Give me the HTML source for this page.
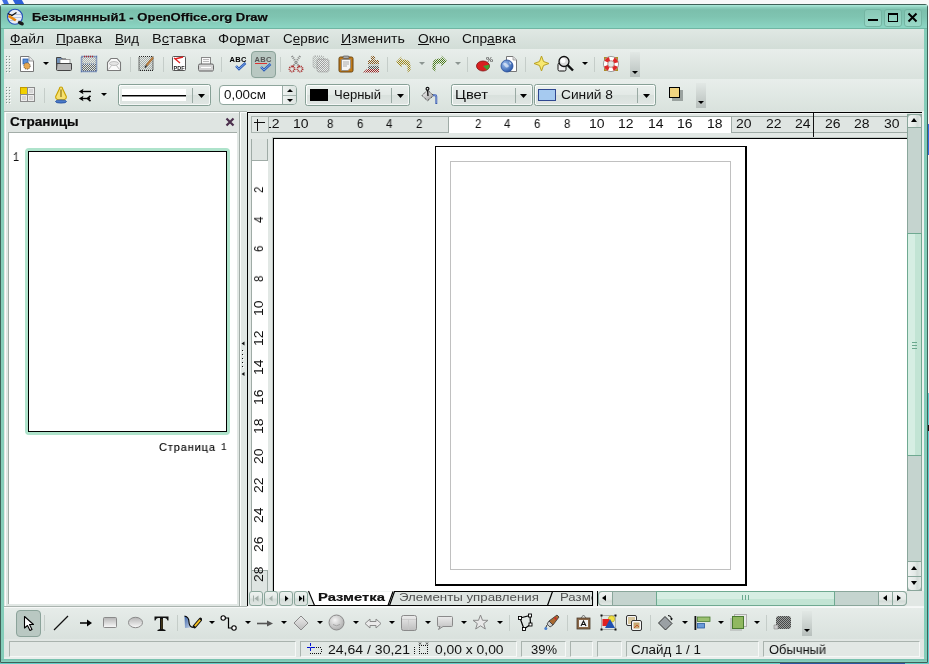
<!DOCTYPE html>
<html><head><meta charset="utf-8"><style>
*{margin:0;padding:0;box-sizing:border-box}
html,body{width:929px;height:664px;overflow:hidden;background:#f7f8f8;font-family:"Liberation Sans",sans-serif;font-size:13px;color:#000}
.a{position:absolute}
.t{position:absolute;white-space:nowrap;line-height:1;transform-origin:0 0;will-change:transform}
.grip{position:absolute;width:5px;background-image:radial-gradient(circle at 1px 1px,#aab6b1 0.9px,transparent 1.1px);background-size:3px 3px}
.sep{position:absolute;width:1px;height:15px;background:#c3ccc8}
.dd{position:absolute;width:0;height:0;border-left:3px solid transparent;border-right:3px solid transparent;border-top:3px solid #000}
.combo{position:absolute;border:1px solid #8fa69d;border-radius:4px;background:linear-gradient(#e6ece9,#dce3df)}
.field{position:absolute;background:#fff}
.sbtn{position:absolute;border:1px solid #8fa69d;background:linear-gradient(90deg,#e9eeec,#dfe6e3 60%,#d3dcd8)}
.tri-u{position:absolute;width:0;height:0;border-left:3.5px solid transparent;border-right:3.5px solid transparent;border-bottom:4px solid #000}
.tri-d{position:absolute;width:0;height:0;border-left:3.5px solid transparent;border-right:3.5px solid transparent;border-top:4px solid #000}
.tri-l{position:absolute;width:0;height:0;border-top:3.5px solid transparent;border-bottom:3.5px solid transparent;border-right:4px solid #000}
.tri-r{position:absolute;width:0;height:0;border-top:3.5px solid transparent;border-bottom:3.5px solid transparent;border-left:4px solid #000}
.stf{position:absolute;top:641px;height:16px;border-top:1px solid #a9b3ae;border-left:1px solid #a9b3ae;border-bottom:1px solid #f4f7f6;border-right:1px solid #f4f7f6}
</style></head><body>
<div class="a" style="left:3px;top:0;width:5px;height:4px;background:#3d6be0;transform:skewX(25deg)"></div>
<div class="a" style="left:14px;top:0;width:9px;height:4px;background:#2d5fd8;transform:skewX(30deg)"></div>
<div class="a" style="left:928px;top:124px;width:1px;height:31px;background:#2f6ce0"></div>
<div class="a" style="left:928px;top:393px;width:1px;height:270px;background:#5ecfcf"></div>
<div class="a" style="left:928px;top:425px;width:1px;height:6px;background:#111"></div>
<div class="a" style="left:0px;top:663px;width:929px;height:1px;background:#62cfc8"></div>
<div class="a" style="left:780px;top:663px;width:125px;height:1px;background:#2a58a6"></div>
<div class="a" style="left:0px;top:4px;width:928px;height:659px;background:#84cdb9;border:1px solid #3f6158;border-radius:3px 3px 0 0"></div>
<div class="a" style="left:1px;top:5px;width:926px;height:24px;background:linear-gradient(#a6e4d4 0,#a6e4d4 1px,#90d2c0 2px,#7bbfac 5px,#7fc4b1 12px,#8ad4c2 22px,#8ad4c2 23px,#70b6a3 23px)"></div>
<div class="a" style="left:4px;top:29px;width:920px;height:630px;background:#e2e8e5"></div>
<div class="a" style="left:1px;top:659px;width:926px;height:3px;background:linear-gradient(#76bfac,#8ad2c0)"></div>
<div class="a" style="left:4px;top:29px;width:920px;height:20px;background:linear-gradient(#e0e8e4,#d2ddd7)"></div>
<div class="a" style="left:4px;top:49px;width:920px;height:30px;background:linear-gradient(#e8eeeb,#d9e2dd)"></div>
<div class="a" style="left:4px;top:79px;width:920px;height:32px;background:linear-gradient(#e8eeeb,#d9e2dd)"></div>
<div class="t" style="left:32.00px;top:11.06px;font-family:'Liberation Sans',sans-serif;font-size:11.7px;font-weight:bold;color:#0a0a0a;transform:scaleX(1.1160);text-shadow:0 1px 1px rgba(230,255,245,0.6);-webkit-text-stroke:0.25px #0a0a0a">Безымянный1 - OpenOffice.org Draw</div>
<div class="a" style="left:864px;top:9px;width:18px;height:18px;border:1px solid #74b5a3;border-radius:3px;background:linear-gradient(#88c8b6,#9ad9c8)"></div>
<div class="a" style="left:884px;top:9px;width:18px;height:18px;border:1px solid #74b5a3;border-radius:3px;background:linear-gradient(#88c8b6,#9ad9c8)"></div>
<div class="a" style="left:904px;top:9px;width:18px;height:18px;border:1px solid #74b5a3;border-radius:3px;background:linear-gradient(#88c8b6,#9ad9c8)"></div>
<div class="a" style="left:868px;top:19px;width:10px;height:2px;background:#000"></div>
<div class="a" style="left:888px;top:13px;width:10px;height:9px;border:1.5px solid #000;border-top-width:2.5px"></div>
<svg class="a" style="left:907px;top:12px" width="11" height="11"><path d="M1.5 1.5L9.5 9.5M9.5 1.5L1.5 9.5" stroke="#000" stroke-width="2"/></svg>
<div class="t" style="left:10.00px;top:31.95px;font-family:'Liberation Sans',sans-serif;font-size:13px;font-weight:normal;color:#111;transform:scaleX(1.0632);">Файл</div>
<div class="t" style="left:56.00px;top:31.95px;font-family:'Liberation Sans',sans-serif;font-size:13px;font-weight:normal;color:#111;transform:scaleX(1.0469);">Правка</div>
<div class="t" style="left:115.00px;top:31.95px;font-family:'Liberation Sans',sans-serif;font-size:13px;font-weight:normal;color:#111;transform:scaleX(1.0200);">Вид</div>
<div class="t" style="left:152.00px;top:31.95px;font-family:'Liberation Sans',sans-serif;font-size:13px;font-weight:normal;color:#111;transform:scaleX(1.1166);">Вставка</div>
<div class="t" style="left:218.00px;top:31.95px;font-family:'Liberation Sans',sans-serif;font-size:13px;font-weight:normal;color:#111;transform:scaleX(1.1268);">Формат</div>
<div class="t" style="left:283.00px;top:31.95px;font-family:'Liberation Sans',sans-serif;font-size:13px;font-weight:normal;color:#111;transform:scaleX(1.0331);">Сервис</div>
<div class="t" style="left:341.00px;top:31.95px;font-family:'Liberation Sans',sans-serif;font-size:13px;font-weight:normal;color:#111;transform:scaleX(1.0916);">Изменить</div>
<div class="t" style="left:418.00px;top:31.95px;font-family:'Liberation Sans',sans-serif;font-size:13px;font-weight:normal;color:#111;transform:scaleX(1.0587);">Окно</div>
<div class="t" style="left:462.00px;top:31.95px;font-family:'Liberation Sans',sans-serif;font-size:13px;font-weight:normal;color:#111;transform:scaleX(1.0583);">Справка</div>
<div class="a" style="left:10.0px;top:44px;width:10.5px;height:1px;background:#111"></div>
<div class="a" style="left:56.0px;top:44px;width:9.8px;height:1px;background:#111"></div>
<div class="a" style="left:115.0px;top:44px;width:8.8px;height:1px;background:#111"></div>
<div class="a" style="left:161.7px;top:44px;width:7.3px;height:1px;background:#111"></div>
<div class="a" style="left:237.3px;top:44px;width:8.1px;height:1px;background:#111"></div>
<div class="a" style="left:292.7px;top:44px;width:7.5px;height:1px;background:#111"></div>
<div class="a" style="left:341.0px;top:44px;width:10.2px;height:1px;background:#111"></div>
<div class="a" style="left:418.0px;top:44px;width:10.7px;height:1px;background:#111"></div>
<div class="a" style="left:487.0px;top:44px;width:7.7px;height:1px;background:#111"></div>
<svg width="0" height="0" style="position:absolute"><defs><pattern id="chk" width="2" height="2" patternUnits="userSpaceOnUse"><rect width="1" height="1" fill="#555"/><rect x="1" y="1" width="1" height="1" fill="#555"/></pattern><pattern id="chkY" width="2" height="2" patternUnits="userSpaceOnUse"><rect width="1" height="1" fill="#a08818"/><rect x="1" y="1" width="1" height="1" fill="#a08818"/></pattern><pattern id="chkG" width="2" height="2" patternUnits="userSpaceOnUse"><rect width="1" height="1" fill="#4a7a18"/><rect x="1" y="1" width="1" height="1" fill="#4a7a18"/></pattern><pattern id="chkR" width="2" height="2" patternUnits="userSpaceOnUse"><rect width="1" height="1" fill="#a02020"/><rect x="1" y="1" width="1" height="1" fill="#a02020"/></pattern><pattern id="chkBr" width="2" height="2" patternUnits="userSpaceOnUse"><rect width="1" height="1" fill="#8a5a20"/><rect x="1" y="1" width="1" height="1" fill="#8a5a20"/></pattern><pattern id="chkb" width="2" height="2" patternUnits="userSpaceOnUse"><rect width="1" height="1" fill="#2a4f9a"/><rect x="1" y="1" width="1" height="1" fill="#2a4f9a"/></pattern></defs></svg>
<svg class="a" style="left:6px;top:56px" width="6" height="19" viewBox="0 0 6 19"><rect x="1" y="1" width="1" height="1" fill="#fafcfb"/><rect x="0" y="0" width="1" height="1" fill="#7f8d88"/><rect x="4" y="1" width="1" height="1" fill="#fafcfb"/><rect x="3" y="0" width="1" height="1" fill="#7f8d88"/><rect x="1" y="4" width="1" height="1" fill="#fafcfb"/><rect x="0" y="3" width="1" height="1" fill="#7f8d88"/><rect x="4" y="4" width="1" height="1" fill="#fafcfb"/><rect x="3" y="3" width="1" height="1" fill="#7f8d88"/><rect x="1" y="7" width="1" height="1" fill="#fafcfb"/><rect x="0" y="6" width="1" height="1" fill="#7f8d88"/><rect x="4" y="7" width="1" height="1" fill="#fafcfb"/><rect x="3" y="6" width="1" height="1" fill="#7f8d88"/><rect x="1" y="10" width="1" height="1" fill="#fafcfb"/><rect x="0" y="9" width="1" height="1" fill="#7f8d88"/><rect x="4" y="10" width="1" height="1" fill="#fafcfb"/><rect x="3" y="9" width="1" height="1" fill="#7f8d88"/><rect x="1" y="13" width="1" height="1" fill="#fafcfb"/><rect x="0" y="12" width="1" height="1" fill="#7f8d88"/><rect x="4" y="13" width="1" height="1" fill="#fafcfb"/><rect x="3" y="12" width="1" height="1" fill="#7f8d88"/><rect x="1" y="16" width="1" height="1" fill="#fafcfb"/><rect x="0" y="15" width="1" height="1" fill="#7f8d88"/><rect x="4" y="16" width="1" height="1" fill="#fafcfb"/><rect x="3" y="15" width="1" height="1" fill="#7f8d88"/></svg>
<svg class="a" style="left:6px;top:87px" width="6" height="19" viewBox="0 0 6 19"><rect x="1" y="1" width="1" height="1" fill="#fafcfb"/><rect x="0" y="0" width="1" height="1" fill="#7f8d88"/><rect x="4" y="1" width="1" height="1" fill="#fafcfb"/><rect x="3" y="0" width="1" height="1" fill="#7f8d88"/><rect x="1" y="4" width="1" height="1" fill="#fafcfb"/><rect x="0" y="3" width="1" height="1" fill="#7f8d88"/><rect x="4" y="4" width="1" height="1" fill="#fafcfb"/><rect x="3" y="3" width="1" height="1" fill="#7f8d88"/><rect x="1" y="7" width="1" height="1" fill="#fafcfb"/><rect x="0" y="6" width="1" height="1" fill="#7f8d88"/><rect x="4" y="7" width="1" height="1" fill="#fafcfb"/><rect x="3" y="6" width="1" height="1" fill="#7f8d88"/><rect x="1" y="10" width="1" height="1" fill="#fafcfb"/><rect x="0" y="9" width="1" height="1" fill="#7f8d88"/><rect x="4" y="10" width="1" height="1" fill="#fafcfb"/><rect x="3" y="9" width="1" height="1" fill="#7f8d88"/><rect x="1" y="13" width="1" height="1" fill="#fafcfb"/><rect x="0" y="12" width="1" height="1" fill="#7f8d88"/><rect x="4" y="13" width="1" height="1" fill="#fafcfb"/><rect x="3" y="12" width="1" height="1" fill="#7f8d88"/><rect x="1" y="16" width="1" height="1" fill="#fafcfb"/><rect x="0" y="15" width="1" height="1" fill="#7f8d88"/><rect x="4" y="16" width="1" height="1" fill="#fafcfb"/><rect x="3" y="15" width="1" height="1" fill="#7f8d88"/></svg>
<svg class="a" style="left:6px;top:615px" width="6" height="19" viewBox="0 0 6 19"><rect x="1" y="1" width="1" height="1" fill="#fafcfb"/><rect x="0" y="0" width="1" height="1" fill="#7f8d88"/><rect x="4" y="1" width="1" height="1" fill="#fafcfb"/><rect x="3" y="0" width="1" height="1" fill="#7f8d88"/><rect x="1" y="4" width="1" height="1" fill="#fafcfb"/><rect x="0" y="3" width="1" height="1" fill="#7f8d88"/><rect x="4" y="4" width="1" height="1" fill="#fafcfb"/><rect x="3" y="3" width="1" height="1" fill="#7f8d88"/><rect x="1" y="7" width="1" height="1" fill="#fafcfb"/><rect x="0" y="6" width="1" height="1" fill="#7f8d88"/><rect x="4" y="7" width="1" height="1" fill="#fafcfb"/><rect x="3" y="6" width="1" height="1" fill="#7f8d88"/><rect x="1" y="10" width="1" height="1" fill="#fafcfb"/><rect x="0" y="9" width="1" height="1" fill="#7f8d88"/><rect x="4" y="10" width="1" height="1" fill="#fafcfb"/><rect x="3" y="9" width="1" height="1" fill="#7f8d88"/><rect x="1" y="13" width="1" height="1" fill="#fafcfb"/><rect x="0" y="12" width="1" height="1" fill="#7f8d88"/><rect x="4" y="13" width="1" height="1" fill="#fafcfb"/><rect x="3" y="12" width="1" height="1" fill="#7f8d88"/><rect x="1" y="16" width="1" height="1" fill="#fafcfb"/><rect x="0" y="15" width="1" height="1" fill="#7f8d88"/><rect x="4" y="16" width="1" height="1" fill="#fafcfb"/><rect x="3" y="15" width="1" height="1" fill="#7f8d88"/></svg>
<svg class="a" style="left:19px;top:55px" width="16" height="18" viewBox="0 0 16 18"><path d="M1.5 1.5H10L14.5 6V16.5H1.5Z" fill="#fff" stroke="#777"/><path d="M10 1.5V6H14.5" fill="#e8e8e8" stroke="#999"/><rect x="4" y="4" width="5" height="5" fill="#5b8fd8" stroke="#2b5fb0" stroke-width="0.8"/><circle cx="8" cy="11" r="3.2" fill="#e8a850" stroke="#333" stroke-width="0.8" stroke-dasharray="1 1"/></svg>
<div class="a" style="left:43px;top:62px;width:0px;height:0px;border-left:3px solid transparent;border-right:3px solid transparent;border-top:3px solid #000"></div>
<svg class="a" style="left:55px;top:55px" width="18" height="17" viewBox="0 0 18 17"><path d="M1.5 2.5H6L7.5 4H11V14.5H1.5Z" fill="#6f8fb8" stroke="#444"/><rect x="5" y="4.5" width="10" height="5" fill="#fff" stroke="#888" stroke-width="0.8"/><path d="M2 8.5H16.5V14.5Q16.5 15.5 15.5 15.5H2.5Q1.5 15.5 1.5 14.5Z" fill="#b8b8b8" stroke="#444"/></svg>
<svg class="a" style="left:80px;top:55px" width="18" height="18" viewBox="0 0 18 18"><rect x="2" y="2" width="14" height="7" fill="url(#chk)" opacity="0.35"/><rect x="2" y="9" width="14" height="7" fill="url(#chk)" opacity="0.85"/><rect x="1.5" y="1.5" width="15" height="15" fill="none" stroke="#2f4f95" stroke-width="1.6" stroke-dasharray="1.1 0.9"/><path d="M4 1.5H14" stroke="#b02828" stroke-width="1.6" stroke-dasharray="1.1 0.9"/><path d="M3 9H15" stroke="#4a6ab0" stroke-width="0.8" stroke-dasharray="1 1"/></svg>
<svg class="a" style="left:106px;top:57px" width="16" height="15" viewBox="0 0 16 15"><path d="M5 1.5H11L14.5 5.5V13.5H1.5V5.5Z" fill="#fafafa" stroke="#7a7a7a" stroke-width="1.1"/><ellipse cx="8" cy="6.5" rx="4.5" ry="2" fill="#e4e4e4" stroke="#aaa" stroke-width="0.7"/><path d="M2.5 12.5L5.5 8.5M13.5 12.5L10.5 8.5" stroke="#aaa" stroke-width="0.8"/></svg>
<div class="a" style="left:130px;top:57px;width:1px;height:15px;background:#c5cdc9"></div>
<svg class="a" style="left:138px;top:55px" width="17" height="17" viewBox="0 0 17 17"><rect x="1" y="1.5" width="14" height="14" fill="url(#chk)" opacity="0.4"/><rect x="1" y="1.5" width="14" height="14" fill="none" stroke="#222" stroke-width="1.2" stroke-dasharray="1 1"/><path d="M15 2.5L8.5 10.5" stroke="#a06a30" stroke-width="2"/><path d="M15 2.5L8.5 10.5" stroke="#e0a060" stroke-width="0.6"/><path d="M8.5 10.5L7 12.5" stroke="#222" stroke-width="1.4"/></svg>
<div class="a" style="left:163px;top:57px;width:1px;height:15px;background:#c5cdc9"></div>
<svg class="a" style="left:171px;top:55px" width="16" height="17" viewBox="0 0 16 17"><rect x="1.5" y="1.5" width="13" height="14" rx="1" fill="#fff" stroke="#555"/><path d="M3 3L9 8M4 4Q8 3 12 2" stroke="#e02020" stroke-width="1.3" fill="none"/><text x="8" y="14.5" font-family="Liberation Sans" font-weight="bold" font-size="5.5" text-anchor="middle" fill="#222">PDF</text></svg>
<svg class="a" style="left:197px;top:56px" width="17" height="17" viewBox="0 0 17 17"><rect x="4.5" y="1.5" width="9" height="7" fill="#fafafa" stroke="#888"/><path d="M6 3.5H12M6 5.5H12" stroke="#aaa" stroke-width="0.8"/><rect x="1.5" y="8" width="15" height="7" rx="1.5" fill="#d4d4d4" stroke="#666"/><path d="M4 11.5H14" stroke="#fff"/><rect x="2" y="14" width="14" height="1.5" fill="#999"/></svg>
<div class="a" style="left:221px;top:57px;width:1px;height:15px;background:#c5cdc9"></div>
<svg class="a" style="left:229px;top:55px" width="18" height="17" viewBox="0 0 18 17"><text x="0.5" y="7" font-family="Liberation Sans" font-weight="bold" font-size="7.5" fill="#000" letter-spacing="0.3">ABC</text><path d="M7 11L10 14L16.5 8" stroke="#2a5cb8" stroke-width="2.4" fill="none"/><path d="M7 11L10 14L16.5 8" stroke="#8fb4ee" stroke-width="0.8" fill="none"/></svg>
<div class="a" style="left:251px;top:51px;width:25px;height:27px;border:1px solid #8ba39a;border-radius:4px;background:#b9c8c2"></div>
<svg class="a" style="left:254px;top:55px" width="18" height="17" viewBox="0 0 18 17"><text x="0.5" y="7" font-family="Liberation Sans" font-weight="bold" font-size="7.5" fill="#555" letter-spacing="0.3">ABC</text><path d="M1 9L2 8L3 9L4 8L5 9L6 8L7 9L8 8L9 9L10 8L11 9L12 8L13 9" stroke="#e02020" stroke-width="0.9" fill="none"/><path d="M7 12L10 15L16.5 9" stroke="#2a5cb8" stroke-width="2.4" fill="none"/><path d="M7 12L10 15L16.5 9" stroke="#8fb4ee" stroke-width="0.8" fill="none"/></svg>
<div class="a" style="left:280px;top:57px;width:1px;height:15px;background:#c5cdc9"></div>
<svg class="a" style="left:288px;top:55px" width="16" height="18" viewBox="0 0 16 18"><path d="M4 1L10.5 11M12 1L5.5 11" stroke="#666" stroke-width="2.2" stroke-dasharray="1 1" opacity="0.8"/><circle cx="4" cy="14" r="2.6" fill="none" stroke="#a83030" stroke-width="1.8" stroke-dasharray="1 0.8"/><circle cx="12" cy="14" r="2.6" fill="none" stroke="#a83030" stroke-width="1.8" stroke-dasharray="1 0.8"/><path d="M5.5 10.5L4.5 12M10.5 10.5L11.5 12" stroke="#a83030" stroke-width="1.6"/></svg>
<svg class="a" style="left:312px;top:55px" width="18" height="18" viewBox="0 0 18 18"><rect x="1" y="1" width="11" height="12" rx="2" fill="url(#chk)" opacity="0.3"/><rect x="1" y="1" width="11" height="12" rx="2" fill="none" stroke="#888" stroke-width="1" stroke-dasharray="1 1" opacity="0.6"/><rect x="5" y="4" width="12" height="13" rx="2" fill="#f0f0f0" opacity="0.6"/><rect x="5" y="4" width="12" height="13" rx="2" fill="url(#chk)" opacity="0.45"/><rect x="5" y="4" width="12" height="13" rx="2" fill="none" stroke="#777" stroke-width="1" stroke-dasharray="1 1" opacity="0.7"/></svg>
<svg class="a" style="left:338px;top:55px" width="16" height="18" viewBox="0 0 16 18"><rect x="1" y="2" width="14" height="15" rx="1.5" fill="#c07a18" stroke="#6a4410"/><rect x="5" y="1" width="6" height="2.5" rx="1" fill="#aaa" stroke="#555" stroke-width="0.7"/><path d="M3.5 4.5H12.5V13L10 15.5H3.5Z" fill="#f6f6f6" stroke="#888" stroke-width="0.8"/><path d="M5 7H11M5 9H11M5 11H9" stroke="#999" stroke-width="0.8"/></svg>
<svg class="a" style="left:362px;top:55px" width="18" height="18" viewBox="0 0 18 18"><circle cx="11" cy="3" r="2.3" fill="url(#chkBr)"/><rect x="6" y="5" width="11" height="4" fill="url(#chkBr)"/><rect x="6" y="9" width="11" height="2" fill="url(#chk)" opacity="0.35"/><rect x="6" y="11" width="11" height="3" fill="url(#chk)"/><path d="M1 17.5L5 14H17V17.5Z" fill="url(#chkR)"/></svg>
<div class="a" style="left:387px;top:57px;width:1px;height:15px;background:#c5cdc9"></div>
<svg class="a" style="left:395px;top:56px" width="17" height="17" viewBox="0 0 17 17"><path d="M1 6L6.5 0.5V3.5H9Q15.5 3.5 15.5 10V14L12.5 16.5V11Q12.5 8.5 9 8.5H6.5V11.5Z" fill="url(#chkY)"/></svg>
<div class="a" style="left:419px;top:62px;width:0px;height:0px;border-left:3px solid transparent;border-right:3px solid transparent;border-top:3px solid #8c9591"></div>
<svg class="a" style="left:431px;top:55px" width="17" height="18" viewBox="0 0 17 18"><path d="M16 6L10.5 0.5V3.5H8Q1.5 3.5 1.5 10V14L4.5 16.5V11Q4.5 8.5 8 8.5H10.5V11.5Z" fill="url(#chkG)"/></svg>
<div class="a" style="left:455px;top:62px;width:0px;height:0px;border-left:3px solid transparent;border-right:3px solid transparent;border-top:3px solid #8c9591"></div>
<div class="a" style="left:467px;top:57px;width:1px;height:15px;background:#c5cdc9"></div>
<svg class="a" style="left:475px;top:55px" width="18" height="17" viewBox="0 0 18 17"><ellipse cx="8" cy="11" rx="6.5" ry="5" fill="#d82020" stroke="#801010" stroke-width="0.8"/><path d="M8 11L14.5 9.5Q15 13 12 15Z" fill="#40a030"/><text x="11" y="7" font-family="Liberation Sans" font-weight="bold" font-size="8" fill="#666">%</text></svg>
<svg class="a" style="left:500px;top:55px" width="18" height="18" viewBox="0 0 18 18"><defs><radialGradient id="glb" cx="0.35" cy="0.35" r="0.7"><stop offset="0" stop-color="#9cc0f0"/><stop offset="1" stop-color="#2a58a8"/></radialGradient></defs><path d="M6.5 1.5H13L16.5 5V16.5H6.5Z" fill="#fff" stroke="#777"/><path d="M13 1.5V5H16.5" fill="#ddd" stroke="#999" stroke-width="0.8"/><circle cx="7" cy="11" r="6" fill="url(#glb)" stroke="#2a4f9a" stroke-width="0.8"/><path d="M3 9Q4.5 7 6.5 8.5T9 11Q8 13 6 12.5ZM9 6.5Q11 7 11.5 9L10 9.5Z" fill="#d8e4f4" opacity="0.8"/></svg>
<div class="a" style="left:525px;top:57px;width:1px;height:15px;background:#c5cdc9"></div>
<svg class="a" style="left:533px;top:55px" width="17" height="17" viewBox="0 0 17 17"><path d="M8.5 1L10.5 6.5L16 8.5L10.5 10.5L8.5 16L6.5 10.5L1 8.5L6.5 6.5Z" fill="#f8e870" stroke="#b8a020"/></svg>
<svg class="a" style="left:557px;top:55px" width="18" height="18" viewBox="0 0 18 18"><rect x="1" y="8" width="8" height="8" rx="1.5" fill="#f0f0f0" stroke="#111"/><circle cx="7" cy="6.5" r="5" fill="#ddd" stroke="#111" stroke-width="1.3"/><circle cx="6" cy="5.5" r="2.5" fill="#fff"/><path d="M10.5 10L16 15.5" stroke="#111" stroke-width="2.4"/></svg>
<div class="a" style="left:582px;top:62px;width:0px;height:0px;border-left:3px solid transparent;border-right:3px solid transparent;border-top:3px solid #000"></div>
<div class="a" style="left:594px;top:57px;width:1px;height:15px;background:#c5cdc9"></div>
<svg class="a" style="left:602px;top:55px" width="18" height="18" viewBox="0 0 18 18"><rect x="2" y="2" width="14" height="14" fill="#a88010" opacity="0.9"/><circle cx="9" cy="9" r="7.6" fill="#fff" stroke="#8a8a8a" stroke-width="0.8"/><circle cx="9" cy="9" r="5.4" fill="none" stroke="#e02828" stroke-width="4" stroke-dasharray="4.24 4.24" transform="rotate(22.5 9 9)"/><circle cx="9" cy="9" r="3.3" fill="#e2e8e5" stroke="#a04040" stroke-width="0.6"/></svg>
<div class="a" style="left:630px;top:52px;width:10px;height:25px;background:linear-gradient(#e2e8e5,#b9c1be)"></div>
<div class="a" style="left:632px;top:71px;width:0px;height:0px;border-left:3px solid transparent;border-right:3px solid transparent;border-top:3px solid #000"></div>
<svg class="a" style="left:19px;top:86px" width="17" height="17" viewBox="0 0 17 17"><rect x="1.5" y="1.5" width="7" height="7" fill="#f0d000" stroke="#c09800"/><rect x="8.5" y="1.5" width="7" height="7" fill="#d6d6d6" stroke="#8a8a8a"/><rect x="1.5" y="8.5" width="7" height="7" fill="#d6d6d6" stroke="#8a8a8a"/><rect x="8.5" y="8.5" width="7" height="7" fill="#d6d6d6" stroke="#8a8a8a"/><path d="M9.5 9.5V14.5H14.5V9.5ZM2.5 9.5V14.5H7.5V9.5ZM9.5 2.5V7.5H14.5V2.5Z" fill="none" stroke="#f6f6f6" stroke-width="0.7"/></svg>
<div class="a" style="left:44px;top:88px;width:1px;height:15px;background:#c5cdc9"></div>
<svg class="a" style="left:54px;top:86px" width="14" height="18" viewBox="0 0 14 18"><path d="M7 1Q8.6 1 8.6 2.8L12.3 10.5Q13 14 7 14Q1 14 1.7 10.5L5.4 2.8Q5.4 1 7 1Z" fill="#f6e070" stroke="#c8a000" stroke-width="1.1"/><path d="M7 3.5V11" stroke="#7a6000" stroke-width="1"/><ellipse cx="7" cy="15.5" rx="5.5" ry="1.6" fill="#4a7ac8" stroke="#1e4a9a" stroke-width="0.8"/></svg>
<svg class="a" style="left:78px;top:88px" width="14" height="14" viewBox="0 0 14 14"><path d="M3 3.5H13" stroke="#000" stroke-width="1.4"/><path d="M0.8 3.5L5.5 0.8L4.5 3.5L5.5 6.2Z" fill="#000"/><path d="M3 10.5H12" stroke="#000" stroke-width="1.4"/><path d="M0.8 10.5L5.5 7.8L4.5 10.5L5.5 13.2Z" fill="#000"/><path d="M12.5 7.8L9.5 10.5L12.5 13.2" stroke="#000" stroke-width="1.6" fill="none"/></svg>
<div class="a" style="left:101px;top:93px;width:0px;height:0px;border-left:3px solid transparent;border-right:3px solid transparent;border-top:3px solid #000"></div>
<div class="a" style="left:118px;top:84px;width:93px;height:22px;border:1px solid #87a096;border-radius:2.5px;box-shadow:inset 1px 1px 0 #fbfdfc,inset -1px -1px 0 #f4f7f6;background:linear-gradient(#eaf0ed,#e3e9e6 48%,#d9e1dd 52%,#e0e6e3)"></div>
<div class="a" style="left:122px;top:89px;width:64px;height:12px;background:#fff"></div>
<div class="a" style="left:122px;top:95px;width:64px;height:1px;background:#000"></div>
<div class="a" style="left:122px;top:96px;width:64px;height:1px;background:#888"></div>
<div class="a" style="left:192px;top:88px;width:1px;height:15px;background:#9aaaa4"></div>
<svg class="a" style="left:198px;top:94px" width="7" height="4" viewBox="0 0 7 4"><path d="M0 0H7L3.5 4Z" fill="#000"/></svg>
<div class="a" style="left:219px;top:85px;width:78px;height:20px;border:1px solid #8fa69d;border-radius:4px;background:#fff"></div>
<div class="a" style="left:282px;top:86px;width:14px;height:18px;border-left:1px solid #9aaba5;border-radius:0 3px 3px 0;background:linear-gradient(90deg,#eef2f0,#dde4e1)"></div>
<div class="a" style="left:283px;top:95px;width:13px;height:1px;background:#a8b6b1"></div>
<div class="a" style="left:287px;top:89px;width:0px;height:0px;border-left:3px solid transparent;border-right:3px solid transparent;border-bottom:3px solid #000"></div>
<div class="a" style="left:287px;top:99px;width:0px;height:0px;border-left:3px solid transparent;border-right:3px solid transparent;border-top:3px solid #000"></div>
<div class="t" style="left:224.00px;top:87.95px;font-family:'Liberation Sans',sans-serif;font-size:13px;font-weight:normal;color:#111;transform:scaleX(1.0305);">0,00см</div>
<div class="a" style="left:305px;top:84px;width:105px;height:22px;border:1px solid #87a096;border-radius:2.5px;box-shadow:inset 1px 1px 0 #fbfdfc,inset -1px -1px 0 #f4f7f6;background:linear-gradient(#eaf0ed,#e3e9e6 48%,#d9e1dd 52%,#e0e6e3)"></div>
<div class="a" style="left:310px;top:89px;width:18px;height:12px;background:#000"></div>
<div class="t" style="left:334.00px;top:87.95px;font-family:'Liberation Sans',sans-serif;font-size:13px;font-weight:normal;color:#111;transform:scaleX(1.0015);">Черный</div>
<div class="a" style="left:391px;top:88px;width:1px;height:15px;background:#9aaaa4"></div>
<svg class="a" style="left:397px;top:94px" width="7" height="4" viewBox="0 0 7 4"><path d="M0 0H7L3.5 4Z" fill="#000"/></svg>
<svg class="a" style="left:418px;top:85px" width="22" height="22" viewBox="0 0 22 22"><defs><linearGradient id="bk" x1="0" y1="0" x2="1" y2="1"><stop offset="0" stop-color="#fafafa"/><stop offset="1" stop-color="#9a9a9a"/></linearGradient></defs><path d="M4 10.5L9.5 5L15.5 10.5L9.5 15.8Z" fill="url(#bk)" stroke="#333" stroke-width="1" stroke-dasharray="1.2 0.8"/><circle cx="9.5" cy="3.8" r="1.4" fill="#fff" stroke="#111" stroke-width="1.2"/><path d="M9.6 5.2L10 11" stroke="#111" stroke-width="1.3"/><path d="M15 10.2H17Q18.3 10.2 18.3 11.5V19" stroke="#3a5cb0" stroke-width="1.9" fill="none"/><path d="M15.5 10.2H17Q18.3 10.2 18.3 11.5V18" stroke="#b8c8ee" stroke-width="0.5" fill="none"/></svg>
<div class="a" style="left:451px;top:84px;width:82px;height:22px;border:1px solid #87a096;border-radius:2.5px;box-shadow:inset 1px 1px 0 #fbfdfc,inset -1px -1px 0 #f4f7f6;background:linear-gradient(#eaf0ed,#e3e9e6 48%,#d9e1dd 52%,#e0e6e3)"></div>
<div class="t" style="left:455.00px;top:87.95px;font-family:'Liberation Sans',sans-serif;font-size:13px;font-weight:normal;color:#111;transform:scaleX(1.1332);">Цвет</div>
<div class="a" style="left:515px;top:88px;width:1px;height:15px;background:#9aaaa4"></div>
<svg class="a" style="left:520px;top:94px" width="7" height="4" viewBox="0 0 7 4"><path d="M0 0H7L3.5 4Z" fill="#000"/></svg>
<div class="a" style="left:534px;top:84px;width:122px;height:22px;border:1px solid #87a096;border-radius:2.5px;box-shadow:inset 1px 1px 0 #fbfdfc,inset -1px -1px 0 #f4f7f6;background:linear-gradient(#eaf0ed,#e3e9e6 48%,#d9e1dd 52%,#e0e6e3)"></div>
<div class="a" style="left:538px;top:89px;width:18px;height:12px;background:#a6caf0;border:1px solid #304890"></div>
<div class="t" style="left:561.00px;top:87.95px;font-family:'Liberation Sans',sans-serif;font-size:13px;font-weight:normal;color:#111;transform:scaleX(1.0568);">Синий 8</div>
<div class="a" style="left:637px;top:88px;width:1px;height:15px;background:#9aaaa4"></div>
<svg class="a" style="left:643px;top:94px" width="7" height="4" viewBox="0 0 7 4"><path d="M0 0H7L3.5 4Z" fill="#000"/></svg>
<div class="a" style="left:672px;top:90px;width:11px;height:11px;background:#9aa29f"></div>
<div class="a" style="left:669px;top:87px;width:11px;height:11px;background:#f0d480;border:1px solid #000"></div>
<div class="a" style="left:696px;top:83px;width:10px;height:25px;background:linear-gradient(#e2e8e5,#b7bfbc)"></div>
<div class="a" style="left:698px;top:101px;width:0px;height:0px;border-left:3px solid transparent;border-right:3px solid transparent;border-top:3px solid #000"></div>
<div class="a" style="left:4px;top:111px;width:920px;height:496px;background:#e1e7e4"></div>
<div class="a" style="left:4px;top:111px;width:243px;height:1px;background:#aab4af"></div>
<div class="a" style="left:4px;top:606px;width:243px;height:1px;background:#aab4af"></div>
<div class="a" style="left:5px;top:112px;width:242px;height:1px;background:#fbfdfc"></div>
<div class="a" style="left:5px;top:112px;width:1px;height:494px;background:#fbfdfc"></div>
<div class="a" style="left:6px;top:113px;width:233px;height:19px;background:#dfe5e2"></div>
<div class="t" style="left:9.60px;top:114.95px;font-family:'Liberation Sans',sans-serif;font-size:13px;font-weight:bold;color:#0a0a0a;transform:scaleX(1.0418);-webkit-text-stroke:0.2px #0a0a0a">Страницы</div>
<svg class="a" style="left:225px;top:117px" width="10" height="10" viewBox="0 0 10 10"><path d="M1.5 1.5L8.5 8.5M8.5 1.5L1.5 8.5" stroke="#4b2f4d" stroke-width="2.2"/></svg>
<div class="a" style="left:8px;top:132px;width:229px;height:1px;background:#a3ada8"></div>
<div class="a" style="left:8px;top:132px;width:1px;height:472px;background:#a3ada8"></div>
<div class="a" style="left:9px;top:133px;width:228px;height:471px;background:#fff"></div>
<div class="t" style="left:13.00px;top:151.88px;font-family:'Liberation Mono',monospace;font-size:12px;font-weight:normal;color:#111;transform:scaleX(0.8333);">1</div>
<div class="a" style="left:25px;top:148px;width:205px;height:287px;border:3px solid #aee3cb;border-radius:4px"></div>
<div class="a" style="left:28px;top:151px;width:199px;height:281px;border:1.5px solid #000;background:#fff"></div>
<div class="t" style="left:159.00px;top:441.14px;font-family:'Liberation Sans',sans-serif;font-size:11.6px;font-weight:normal;color:#000;letter-spacing:0.9px;transform:scaleX(0.9507);-webkit-text-stroke:0.15px #000">Страница</div>
<div class="t" style="left:220.50px;top:442.03px;font-family:'Liberation Mono',monospace;font-size:11.8px;font-weight:normal;color:#111;transform:scaleX(0.7768);-webkit-text-stroke:0.12px #111">1</div>
<div class="a" style="left:239px;top:112px;width:1px;height:494px;background:#a3ada8"></div>
<div class="a" style="left:240px;top:112px;width:1px;height:494px;background:#fbfdfc"></div>
<div class="a" style="left:240px;top:112px;width:7px;height:1px;background:#fbfdfc"></div>
<svg class="a" style="left:240px;top:340px" width="6" height="38" viewBox="0 0 6 38"><path d="M4.5 1.5V5.5L1.5 3.5Z" fill="#111"/><rect x="2" y="10" width="1" height="1" fill="#111"/><rect x="2" y="14" width="1" height="1" fill="#111"/><rect x="2" y="18" width="1" height="1" fill="#111"/><rect x="2" y="22" width="1" height="1" fill="#111"/><rect x="2" y="26" width="1" height="1" fill="#111"/><rect x="3" y="11" width="1" height="1" fill="#fff"/><rect x="3" y="15" width="1" height="1" fill="#fff"/><rect x="3" y="19" width="1" height="1" fill="#fff"/><rect x="3" y="23" width="1" height="1" fill="#fff"/><rect x="3" y="27" width="1" height="1" fill="#fff"/><path d="M4.5 32V36L1.5 34Z" fill="#111"/></svg>
<div class="a" style="left:247px;top:112px;width:677px;height:1px;background:#000"></div>
<div class="a" style="left:247px;top:112px;width:1px;height:494px;background:#000"></div>
<div class="a" style="left:4px;top:607px;width:920px;height:1px;background:#f6f8f7"></div>
<div class="a" style="left:248px;top:113px;width:659px;height:478px;background:#e2e8e5"></div>
<div class="a" style="left:248px;top:113px;width:659px;height:1px;background:#f2f5f4"></div>
<div class="a" style="left:251px;top:116px;width:18px;height:17px;border:1px solid #aab5b0;background:#e2e8e5"></div>
<div class="a" style="left:257px;top:119px;width:1px;height:12px;background:#111"></div>
<div class="a" style="left:254px;top:122px;width:11px;height:1px;background:#111"></div>
<div class="a" style="left:269px;top:116px;width:638px;height:17px;border-top:1px solid #9faba6;border-bottom:1px solid #9faba6;background:#dfe5e2"></div>
<div class="a" style="left:449px;top:117px;width:282px;height:16px;background:#fff"></div>
<div class="a" style="left:448px;top:116px;width:1px;height:17px;background:#9faba6"></div>
<div class="a" style="left:731px;top:116px;width:1px;height:17px;background:#9faba6"></div>
<div class="a" style="left:813px;top:113px;width:1px;height:24px;background:#111"></div>
<div class="a" style="left:251px;top:139px;width:17px;height:452px;border-left:1px solid #9faba6;border-right:1px solid #9faba6;background:#dfe5e2"></div>
<div class="a" style="left:252px;top:161px;width:16px;height:409px;background:#fff"></div>
<div class="a" style="left:251px;top:160px;width:17px;height:1px;background:#9faba6"></div>
<div class="a" style="left:251px;top:570px;width:17px;height:1px;background:#9faba6"></div>
<div class="a" style="left:273px;top:138px;width:634px;height:453px;background:#fff"></div>
<div class="a" style="left:273px;top:138px;width:634px;height:1px;background:#000"></div>
<div class="a" style="left:273px;top:138px;width:1px;height:453px;background:#000"></div>
<div class="a" style="left:272px;top:137px;width:635px;height:1px;background:#c2cac6"></div>
<div class="a" style="left:272px;top:137px;width:1px;height:454px;background:#c2cac6"></div>
<div class="a" style="left:435px;top:146px;width:312px;height:440px;border-left:1px solid #000;border-top:1px solid #000;border-right:2px solid #000;border-bottom:2px solid #000"></div>
<div class="a" style="left:450px;top:161px;width:281px;height:409px;border:1px solid #c0c0c0"></div>
<div class="t" style="left:474.94px;top:116.95px;font-family:'Liberation Sans',sans-serif;font-size:13px;font-weight:normal;color:#111;transform:scaleX(0.8870);">2</div>
<div class="t" style="left:504.48px;top:116.95px;font-family:'Liberation Sans',sans-serif;font-size:13px;font-weight:normal;color:#111;transform:scaleX(0.8870);">4</div>
<div class="t" style="left:534.02px;top:116.95px;font-family:'Liberation Sans',sans-serif;font-size:13px;font-weight:normal;color:#111;transform:scaleX(0.8870);">6</div>
<div class="t" style="left:563.56px;top:116.95px;font-family:'Liberation Sans',sans-serif;font-size:13px;font-weight:normal;color:#111;transform:scaleX(0.8870);">8</div>
<div class="t" style="left:588.55px;top:116.95px;font-family:'Liberation Sans',sans-serif;font-size:13px;font-weight:normal;color:#111;transform:scaleX(1.0742);">10</div>
<div class="t" style="left:618.09px;top:116.95px;font-family:'Liberation Sans',sans-serif;font-size:13px;font-weight:normal;color:#111;transform:scaleX(1.0742);">12</div>
<div class="t" style="left:647.63px;top:116.95px;font-family:'Liberation Sans',sans-serif;font-size:13px;font-weight:normal;color:#111;transform:scaleX(1.0742);">14</div>
<div class="t" style="left:677.17px;top:116.95px;font-family:'Liberation Sans',sans-serif;font-size:13px;font-weight:normal;color:#111;transform:scaleX(1.0742);">16</div>
<div class="t" style="left:706.71px;top:116.95px;font-family:'Liberation Sans',sans-serif;font-size:13px;font-weight:normal;color:#111;transform:scaleX(1.0742);">18</div>
<div class="t" style="left:736.25px;top:116.95px;font-family:'Liberation Sans',sans-serif;font-size:13px;font-weight:normal;color:#111;transform:scaleX(1.0742);">20</div>
<div class="t" style="left:765.79px;top:116.95px;font-family:'Liberation Sans',sans-serif;font-size:13px;font-weight:normal;color:#111;transform:scaleX(1.0742);">22</div>
<div class="t" style="left:795.33px;top:116.95px;font-family:'Liberation Sans',sans-serif;font-size:13px;font-weight:normal;color:#111;transform:scaleX(1.0742);">24</div>
<div class="t" style="left:824.87px;top:116.95px;font-family:'Liberation Sans',sans-serif;font-size:13px;font-weight:normal;color:#111;transform:scaleX(1.0742);">26</div>
<div class="t" style="left:854.41px;top:116.95px;font-family:'Liberation Sans',sans-serif;font-size:13px;font-weight:normal;color:#111;transform:scaleX(1.0742);">28</div>
<div class="t" style="left:883.95px;top:116.95px;font-family:'Liberation Sans',sans-serif;font-size:13px;font-weight:normal;color:#111;transform:scaleX(1.0742);">30</div>
<div class="t" style="left:415.86px;top:116.95px;font-family:'Liberation Sans',sans-serif;font-size:13px;font-weight:normal;color:#111;transform:scaleX(0.8870);">2</div>
<div class="t" style="left:386.32px;top:116.95px;font-family:'Liberation Sans',sans-serif;font-size:13px;font-weight:normal;color:#111;transform:scaleX(0.8870);">4</div>
<div class="t" style="left:356.78px;top:116.95px;font-family:'Liberation Sans',sans-serif;font-size:13px;font-weight:normal;color:#111;transform:scaleX(0.8870);">6</div>
<div class="t" style="left:327.24px;top:116.95px;font-family:'Liberation Sans',sans-serif;font-size:13px;font-weight:normal;color:#111;transform:scaleX(0.8870);">8</div>
<div class="t" style="left:293.15px;top:116.95px;font-family:'Liberation Sans',sans-serif;font-size:13px;font-weight:normal;color:#111;transform:scaleX(1.0742);">10</div>
<div class="a" style="left:269px;top:113px;width:20px;height:20px;overflow:hidden">
<div class="t" style="left:-5.39px;top:3.95px;font-family:'Liberation Sans',sans-serif;font-size:13px;font-weight:normal;color:#111;transform:scaleX(1.0742);">12</div>
</div>
<div class="t" style="left:251.92px;top:193.34px;font-size:13px;color:#111;transform-origin:0 0;transform:rotate(-90deg) scaleX(0.8870)">2</div>
<div class="t" style="left:251.92px;top:222.88px;font-size:13px;color:#111;transform-origin:0 0;transform:rotate(-90deg) scaleX(0.8870)">4</div>
<div class="t" style="left:251.92px;top:252.42px;font-size:13px;color:#111;transform-origin:0 0;transform:rotate(-90deg) scaleX(0.8870)">6</div>
<div class="t" style="left:251.92px;top:281.96px;font-size:13px;color:#111;transform-origin:0 0;transform:rotate(-90deg) scaleX(0.8870)">8</div>
<div class="t" style="left:251.92px;top:316.05px;font-size:13px;color:#111;transform-origin:0 0;transform:rotate(-90deg) scaleX(1.0742)">10</div>
<div class="t" style="left:251.92px;top:345.59px;font-size:13px;color:#111;transform-origin:0 0;transform:rotate(-90deg) scaleX(1.0742)">12</div>
<div class="t" style="left:251.92px;top:375.13px;font-size:13px;color:#111;transform-origin:0 0;transform:rotate(-90deg) scaleX(1.0742)">14</div>
<div class="t" style="left:251.92px;top:404.67px;font-size:13px;color:#111;transform-origin:0 0;transform:rotate(-90deg) scaleX(1.0742)">16</div>
<div class="t" style="left:251.92px;top:434.21px;font-size:13px;color:#111;transform-origin:0 0;transform:rotate(-90deg) scaleX(1.0742)">18</div>
<div class="t" style="left:251.92px;top:463.75px;font-size:13px;color:#111;transform-origin:0 0;transform:rotate(-90deg) scaleX(1.0742)">20</div>
<div class="t" style="left:251.92px;top:493.29px;font-size:13px;color:#111;transform-origin:0 0;transform:rotate(-90deg) scaleX(1.0742)">22</div>
<div class="t" style="left:251.92px;top:522.83px;font-size:13px;color:#111;transform-origin:0 0;transform:rotate(-90deg) scaleX(1.0742)">24</div>
<div class="t" style="left:251.92px;top:552.37px;font-size:13px;color:#111;transform-origin:0 0;transform:rotate(-90deg) scaleX(1.0742)">26</div>
<div class="t" style="left:251.92px;top:581.91px;font-size:13px;color:#111;transform-origin:0 0;transform:rotate(-90deg) scaleX(1.0742)">28</div>
<svg class="a" style="left:6px;top:8px" width="19" height="19" viewBox="0 0 19 19"><circle cx="9" cy="8.8" r="7.5" fill="#e8eef8" stroke="#2450b8" stroke-width="1.1"/><path d="M3 6.5H15M2.5 9.5H15.5M4 12.5H14" stroke="#b4c4e0" stroke-width="1"/><path d="M1.8 5.5L6 7.5L10.5 4.5" stroke="#111" stroke-width="1.2" fill="none"/><path d="M2.5 7.8L10 12.5" stroke="#e88a10" stroke-width="2.6"/><path d="M9.8 12.4L13.2 14.6" stroke="#f0f0f0" stroke-width="2.4"/><ellipse cx="14.8" cy="15.2" rx="3.2" ry="1.8" transform="rotate(25 14.8 15.2)" fill="#1a1a1a"/></svg>
<div class="a" style="left:907px;top:114px;width:15px;height:477px;border:1px solid #8aa69b;background:#c5d4cf"></div>
<div class="a" style="left:907px;top:114px;width:15px;height:14px;border:1px solid #8aa69b;border-radius:4px 4px 0 0;background:linear-gradient(90deg,#f0f3f2,#e3e9e6 55%,#d2dbd7 70%,#e3e9e6)"></div>
<div class="a" style="left:911px;top:118px;width:0px;height:0px;border-left:3.5px solid transparent;border-right:3.5px solid transparent;border-bottom:4px solid #000"></div>
<div class="a" style="left:907px;top:233px;width:15px;height:223px;border:1px solid #6fa991;background:linear-gradient(90deg,#d6eee3 50%,#c2e4d4 50%)"></div>
<div class="a" style="left:912px;top:342px;width:5px;height:1px;background:#6aa88e"></div>
<div class="a" style="left:912px;top:345px;width:5px;height:1px;background:#6aa88e"></div>
<div class="a" style="left:912px;top:348px;width:5px;height:1px;background:#6aa88e"></div>
<div class="a" style="left:907px;top:561px;width:15px;height:16px;border:1px solid #8aa69b;background:linear-gradient(90deg,#f0f3f2,#e3e9e6 55%,#d2dbd7 70%,#e3e9e6)"></div>
<div class="a" style="left:907px;top:576px;width:15px;height:15px;border:1px solid #8aa69b;border-radius:0 0 4px 4px;background:linear-gradient(90deg,#f0f3f2,#e3e9e6 55%,#d2dbd7 70%,#e3e9e6)"></div>
<div class="a" style="left:911px;top:566px;width:0px;height:0px;border-left:3.5px solid transparent;border-right:3.5px solid transparent;border-bottom:4px solid #000"></div>
<div class="a" style="left:911px;top:581px;width:0px;height:0px;border-left:3.5px solid transparent;border-right:3.5px solid transparent;border-top:4px solid #000"></div>
<div class="a" style="left:922px;top:111px;width:2px;height:496px;background:#eef2f0"></div>
<div class="a" style="left:248px;top:591px;width:676px;height:16px;background:#e1e7e4"></div>
<div class="a" style="left:248px;top:606px;width:676px;height:1px;background:#f3f6f5"></div>
<div class="a" style="left:249px;top:591px;width:14px;height:15px;border:1px solid #8aa69b;border-radius:3px;background:linear-gradient(#eef2f0,#e3e9e6 45%,#d3dcd8 55%,#e0e6e3)"></div>
<div class="a" style="left:263.5px;top:591px;width:14px;height:15px;border:1px solid #8aa69b;border-radius:3px;background:linear-gradient(#eef2f0,#e3e9e6 45%,#d3dcd8 55%,#e0e6e3)"></div>
<div class="a" style="left:278.5px;top:591px;width:14px;height:15px;border:1px solid #8aa69b;border-radius:3px;background:linear-gradient(#eef2f0,#e3e9e6 45%,#d3dcd8 55%,#e0e6e3)"></div>
<div class="a" style="left:293.5px;top:591px;width:14px;height:15px;border:1px solid #8aa69b;border-radius:3px;background:linear-gradient(#eef2f0,#e3e9e6 45%,#d3dcd8 55%,#e0e6e3)"></div>
<svg class="a" style="left:252px;top:594px" width="9" height="9" viewBox="0 0 9 9"><rect x="1" y="1.5" width="1" height="6" fill="#a4afaa"/><path d="M6.5 1.5V7.5L2.5 4.5Z" fill="#a4afaa"/></svg>
<svg class="a" style="left:267px;top:594px" width="9" height="9" viewBox="0 0 9 9"><path d="M5.5 1.5V7.5L2 4.5Z" fill="#a4afaa"/></svg>
<svg class="a" style="left:282px;top:594px" width="9" height="9" viewBox="0 0 9 9"><path d="M3 1.5V7.5L6.5 4.5Z" fill="#000"/></svg>
<svg class="a" style="left:297px;top:594px" width="9" height="9" viewBox="0 0 9 9"><path d="M2 1.5V7.5L5.5 4.5Z" fill="#000"/><rect x="6" y="1.5" width="1.2" height="6" fill="#000"/></svg>
<svg class="a" style="left:308px;top:590px" width="290" height="17" viewBox="0 0 290 17"><path d="M81.5 15.5L86.5 1.5H284V15.5Z" fill="#dfe5e2"/><path d="M81.5 15.5L86.5 1.5H284" fill="none" stroke="#000" stroke-width="1.2"/><path d="M239.5 15.5L244.5 1.5" fill="none" stroke="#000" stroke-width="1.2"/><path d="M0 15.5H284" stroke="#000" stroke-width="1.2"/><path d="M0.5 1L6.5 15.5H80L85 1.5" fill="#fff" stroke="#000" stroke-width="1.2"/><rect x="284" y="1" width="1.2" height="15" fill="#000"/><rect x="285.2" y="1" width="4.3" height="15" fill="#eef2f0"/><rect x="289" y="1" width="1.3" height="15" fill="#000"/></svg>
<div class="t" style="left:317.50px;top:591.97px;font-family:'Liberation Sans',sans-serif;font-size:11.8px;font-weight:bold;color:#111;transform:scaleX(1.2534);-webkit-text-stroke:0.2px #111">Разметка</div>
<div class="t" style="left:398.70px;top:591.97px;font-family:'Liberation Sans',sans-serif;font-size:11.8px;font-weight:normal;color:#505050;transform:scaleX(1.1267);">Элементы управления</div>
<div class="a" style="left:555px;top:590px;width:37px;height:14px;overflow:hidden">
<div class="t" style="left:5.20px;top:1.97px;font-family:'Liberation Sans',sans-serif;font-size:11.8px;font-weight:normal;color:#505050;transform:scaleX(1.1200);">Размерные линии</div>
</div>
<div class="a" style="left:598px;top:591px;width:309px;height:15px;border:1px solid #8aa69b;border-radius:4px;background:#c5d4cf"></div>
<div class="a" style="left:598px;top:591px;width:15px;height:15px;border:1px solid #8aa69b;border-radius:4px 0 0 4px;background:linear-gradient(#f0f3f2,#e3e9e6 55%,#d2dbd7 70%,#e3e9e6)"></div>
<div class="a" style="left:878px;top:591px;width:15px;height:15px;border:1px solid #8aa69b;background:linear-gradient(#f0f3f2,#e3e9e6 55%,#d2dbd7 70%,#e3e9e6)"></div>
<div class="a" style="left:892px;top:591px;width:15px;height:15px;border:1px solid #8aa69b;border-radius:0 4px 4px 0;background:linear-gradient(#f0f3f2,#e3e9e6 55%,#d2dbd7 70%,#e3e9e6)"></div>
<div class="a" style="left:656px;top:591px;width:179px;height:15px;border:1px solid #6fa991;background:linear-gradient(#d6eee3 50%,#c2e4d4 50%)"></div>
<div class="a" style="left:742px;top:595px;width:1px;height:5px;background:#6aa88e"></div>
<div class="a" style="left:745px;top:595px;width:1px;height:5px;background:#6aa88e"></div>
<div class="a" style="left:748px;top:595px;width:1px;height:5px;background:#6aa88e"></div>
<div class="a" style="left:602px;top:595px;width:0px;height:0px;border-top:3.5px solid transparent;border-bottom:3.5px solid transparent;border-right:4px solid #000"></div>
<div class="a" style="left:883px;top:595px;width:0px;height:0px;border-top:3.5px solid transparent;border-bottom:3.5px solid transparent;border-right:4px solid #000"></div>
<div class="a" style="left:897px;top:595px;width:0px;height:0px;border-top:3.5px solid transparent;border-bottom:3.5px solid transparent;border-left:4px solid #000"></div>
<div class="a" style="left:4px;top:608px;width:920px;height:31px;background:linear-gradient(#e6ece9,#d9e1dd)"></div>
<div class="a" style="left:16px;top:610px;width:25px;height:27px;border:1px solid #8ba39a;border-radius:4px;background:#b9c8c2"></div>
<svg class="a" style="left:23px;top:615px" width="12" height="17" viewBox="0 0 12 17"><path d="M1.5 1.5V13L4.5 10.5L7 15.5L9 14.5L6.5 9.5H10.5Z" fill="#fff" stroke="#000" stroke-width="1.1" stroke-linejoin="round"/></svg>
<div class="a" style="left:44px;top:615px;width:1px;height:16px;background:#c5cdc9"></div>
<svg class="a" style="left:53px;top:615px" width="16" height="16" viewBox="0 0 16 16"><path d="M1 15L15 1" stroke="#111" stroke-width="1.3"/></svg>
<svg class="a" style="left:79px;top:617px" width="14" height="12" viewBox="0 0 14 12"><path d="M1 6H9" stroke="#000" stroke-width="1.5"/><path d="M8 2.5L13 6L8 9.5Z" fill="#000"/></svg>
<svg class="a" style="left:102px;top:616px" width="16" height="13" viewBox="0 0 16 13"><defs><linearGradient id="rg" x1="0" y1="0" x2="0" y2="1"><stop offset="0" stop-color="#b4b4b4"/><stop offset="1" stop-color="#fafafa"/></linearGradient></defs><rect x="1.5" y="1.5" width="13" height="10" rx="1" fill="url(#rg)" stroke="#8a8a8a"/></svg>
<svg class="a" style="left:127px;top:616px" width="17" height="13" viewBox="0 0 17 13"><ellipse cx="8.5" cy="6.5" rx="7" ry="5.2" fill="url(#rg)" stroke="#8a8a8a"/></svg>
<svg class="a" style="left:153px;top:615px" width="17" height="17" viewBox="0 0 17 17"><path d="M1.5 1.5H15.5V5.5H14.5Q14 3 12 3H10V14L12.5 15V16H4.5V15L7 14V3H5Q3 3 2.5 5.5H1.5Z" fill="#111"/><path d="M8.9 4V14" stroke="#b08a30" stroke-width="0.5"/></svg>
<div class="a" style="left:177px;top:615px;width:1px;height:16px;background:#c5cdc9"></div>
<svg class="a" style="left:183px;top:614px" width="19" height="18" viewBox="0 0 19 18"><defs><linearGradient id="bg1" x1="0" y1="0" x2="1" y2="1"><stop offset="0" stop-color="#3a62a8"/><stop offset="1" stop-color="#d8e4f0"/></linearGradient></defs><path d="M1.5 2Q6 3 6 8Q6 13 10 13.5L2 14Z" fill="url(#bg1)"/><path d="M1.5 2Q6 3 6 8Q6 13 10.5 13.5" stroke="#000" stroke-width="1.1" fill="none"/><path d="M11.5 12.5L17.5 5.5" stroke="#111" stroke-width="3.6" stroke-linecap="round"/><path d="M11.8 12.2L17.2 5.8" stroke="#f4c020" stroke-width="1.8"/></svg>
<div class="a" style="left:209px;top:621px;width:0px;height:0px;border-left:3px solid transparent;border-right:3px solid transparent;border-top:3px solid #000"></div>
<div class="a" style="left:245px;top:621px;width:0px;height:0px;border-left:3px solid transparent;border-right:3px solid transparent;border-top:3px solid #000"></div>
<div class="a" style="left:281px;top:621px;width:0px;height:0px;border-left:3px solid transparent;border-right:3px solid transparent;border-top:3px solid #000"></div>
<div class="a" style="left:317px;top:621px;width:0px;height:0px;border-left:3px solid transparent;border-right:3px solid transparent;border-top:3px solid #000"></div>
<div class="a" style="left:353px;top:621px;width:0px;height:0px;border-left:3px solid transparent;border-right:3px solid transparent;border-top:3px solid #000"></div>
<div class="a" style="left:389px;top:621px;width:0px;height:0px;border-left:3px solid transparent;border-right:3px solid transparent;border-top:3px solid #000"></div>
<div class="a" style="left:425px;top:621px;width:0px;height:0px;border-left:3px solid transparent;border-right:3px solid transparent;border-top:3px solid #000"></div>
<div class="a" style="left:461px;top:621px;width:0px;height:0px;border-left:3px solid transparent;border-right:3px solid transparent;border-top:3px solid #000"></div>
<div class="a" style="left:497px;top:621px;width:0px;height:0px;border-left:3px solid transparent;border-right:3px solid transparent;border-top:3px solid #000"></div>
<div class="a" style="left:682px;top:621px;width:0px;height:0px;border-left:3px solid transparent;border-right:3px solid transparent;border-top:3px solid #000"></div>
<div class="a" style="left:718px;top:621px;width:0px;height:0px;border-left:3px solid transparent;border-right:3px solid transparent;border-top:3px solid #000"></div>
<div class="a" style="left:754px;top:621px;width:0px;height:0px;border-left:3px solid transparent;border-right:3px solid transparent;border-top:3px solid #000"></div>
<svg class="a" style="left:220px;top:614px" width="18" height="18" viewBox="0 0 18 18"><path d="M5 4H8.5V14H12" stroke="#000" stroke-width="1.2" fill="none"/><circle cx="3.2" cy="4" r="2.2" fill="#fff" stroke="#000" stroke-width="1.1"/><circle cx="14" cy="14" r="2.2" fill="#fff" stroke="#000" stroke-width="1.1"/></svg>
<svg class="a" style="left:256px;top:619px" width="18" height="9" viewBox="0 0 18 9"><path d="M1 4.5H12" stroke="#555" stroke-width="1.6"/><path d="M11 1.5L17 4.5L11 7.5Z" fill="#555"/></svg>
<svg class="a" style="left:293px;top:615px" width="16" height="16" viewBox="0 0 16 16"><defs><linearGradient id="gg" x1="0" y1="0" x2="0" y2="1"><stop offset="0" stop-color="#ececec"/><stop offset="1" stop-color="#bdbdbd"/></linearGradient></defs><path d="M8 1L15 8L8 15L1 8Z" fill="url(#gg)" stroke="#8a8a8a"/></svg>
<svg class="a" style="left:328px;top:614px" width="17" height="17" viewBox="0 0 17 17"><defs><radialGradient id="sph" cx="0.4" cy="0.35" r="0.65"><stop offset="0" stop-color="#f4f4f4"/><stop offset="1" stop-color="#b0b0b0"/></radialGradient></defs><circle cx="8.5" cy="8.5" r="7.5" fill="url(#sph)" stroke="#8a8a8a"/><path d="M5 10.5Q8.5 13 12 10.5" stroke="#999" fill="none" stroke-width="0.8"/></svg>
<svg class="a" style="left:364px;top:618px" width="18" height="11" viewBox="0 0 18 11"><path d="M1 5.5L6 1V3.5H12V1L17 5.5L12 10V7.5H6V10Z" fill="#eaeaea" stroke="#8a8a8a"/></svg>
<svg class="a" style="left:400px;top:614px" width="18" height="18" viewBox="0 0 18 18"><rect x="1.5" y="1.5" width="15" height="15" rx="2" fill="url(#gg)" stroke="#8a8a8a"/><path d="M2 5.5H16M8.5 5.5V16" stroke="#c8c8c8" stroke-width="0.8"/></svg>
<svg class="a" style="left:436px;top:615px" width="18" height="16" viewBox="0 0 18 16"><path d="M2.5 1.5H15.5Q16.5 1.5 16.5 2.5V10.5Q16.5 11.5 15.5 11.5H7L2.5 14.5L4 11.5H2.5Q1.5 11.5 1.5 10.5V2.5Q1.5 1.5 2.5 1.5Z" fill="url(#gg)" stroke="#8a8a8a"/></svg>
<svg class="a" style="left:472px;top:614px" width="17" height="17" viewBox="0 0 17 17"><path d="M8.5 1L10.5 6.3H16L11.7 9.6L13.3 15L8.5 11.8L3.7 15L5.3 9.6L1 6.3H6.5Z" fill="#e8e8e8" stroke="#8a8a8a"/></svg>
<div class="a" style="left:509px;top:615px;width:1px;height:16px;background:#c5cdc9"></div>
<svg class="a" style="left:517px;top:613px" width="17" height="18" viewBox="0 0 17 18"><path d="M3 5L13 2.5L13.5 11.5L7 16Z" fill="none" stroke="#000" stroke-width="1.2"/><rect x="1.5" y="3.5" width="3" height="3" fill="#fff" stroke="#000" stroke-width="0.9"/><rect x="11.5" y="1" width="3" height="3" fill="#fff" stroke="#000" stroke-width="0.9"/><rect x="12" y="10" width="3" height="3" fill="#fff" stroke="#000" stroke-width="0.9"/><rect x="5.5" y="14.5" width="3" height="3" fill="#fff" stroke="#000" stroke-width="0.9"/></svg>
<svg class="a" style="left:544px;top:614px" width="16" height="17" viewBox="0 0 16 17"><path d="M13 1L15 3L9 11L5 7Z" fill="#a86830" stroke="#333" stroke-width="0.8"/><path d="M5 7L9 11L6 13L3 10Z" fill="#d0d0d0" stroke="#333" stroke-width="0.8"/><path d="M10.5 3.5L12.5 5.5" stroke="#d02020" stroke-width="1.5"/><path d="M3 11L1.5 14" stroke="#333" stroke-width="1"/><circle cx="1.8" cy="14.5" r="1.5" fill="#4a80d0"/></svg>
<div class="a" style="left:567px;top:615px;width:1px;height:16px;background:#c5cdc9"></div>
<svg class="a" style="left:576px;top:614px" width="15" height="16" viewBox="0 0 15 16"><path d="M5 4L7.5 1L10 4" fill="none" stroke="#555" stroke-width="0.8"/><rect x="1" y="4" width="13" height="11" fill="#8a6848" stroke="#4a3a2a" stroke-width="0.8"/><rect x="3" y="6" width="9" height="7" fill="#f2f2f2"/><path d="M5 12L7.5 7L10 12M6 10.5H9" stroke="#111" stroke-width="1.1" fill="none"/></svg>
<svg class="a" style="left:600px;top:614px" width="17" height="17" viewBox="0 0 17 17"><rect x="1.5" y="1.5" width="14" height="14" fill="none" stroke="#555" stroke-width="0.8" stroke-dasharray="1 1"/><rect x="0.5" y="0.5" width="2" height="2" fill="#111"/><rect x="14.5" y="0.5" width="2" height="2" fill="#111"/><rect x="0.5" y="14.5" width="2" height="2" fill="#111"/><rect x="14.5" y="14.5" width="2" height="2" fill="#111"/><circle cx="11.5" cy="5" r="3.2" fill="#f0e040" stroke="#b0a020" stroke-width="0.6"/><rect x="2.5" y="5" width="7" height="7" fill="#e02020"/><path d="M10 5L15 14H5Z" fill="#2050b0"/></svg>
<svg class="a" style="left:625px;top:614px" width="18" height="18" viewBox="0 0 18 18"><rect x="1.5" y="1.5" width="10" height="10" rx="1.5" fill="#f6f6f6" stroke="#333"/><rect x="3" y="3" width="7" height="7" fill="#d8c8a0"/><rect x="6.5" y="6.5" width="10" height="10" rx="1.5" fill="#f6f6f6" stroke="#333"/><rect x="8.5" y="8.5" width="6" height="6" fill="#c8a870"/><path d="M9 14L12 11L14 13" stroke="#c04020" fill="none" stroke-width="0.8"/></svg>
<div class="a" style="left:650px;top:615px;width:1px;height:16px;background:#c5cdc9"></div>
<svg class="a" style="left:657px;top:614px" width="18" height="18" viewBox="0 0 18 18"><path d="M1.5 9L8 2.5L15 9.5L8.5 16Z" fill="#9aa0a4" stroke="#222" stroke-width="0.9"/><path d="M11 1.5Q14.5 1.5 14.5 5" stroke="#000" stroke-width="1" fill="none"/><path d="M13 4.5L14.5 6.5L16 4.5Z" fill="#000"/></svg>
<svg class="a" style="left:694px;top:615px" width="18" height="16" viewBox="0 0 18 16"><rect x="0.5" y="1" width="1.8" height="14" fill="#111"/><rect x="3.5" y="2" width="12.5" height="4.5" fill="#9ac070" stroke="#4a7a30" stroke-width="0.8"/><rect x="3.5" y="8.5" width="7" height="4.5" fill="#6a9ad8" stroke="#2a5aa0" stroke-width="0.8"/></svg>
<svg class="a" style="left:729px;top:613px" width="19" height="19" viewBox="0 0 19 19"><rect x="5.5" y="1.5" width="12" height="12" fill="#e8e8e8" stroke="#b0b0b0"/><rect x="1" y="5" width="12" height="13" fill="#b8bcba" opacity="0.7"/><rect x="3.5" y="3.5" width="11" height="12" fill="#90b860" stroke="#4a7a30"/></svg>
<div class="a" style="left:766px;top:615px;width:1px;height:16px;background:#c5cdc9"></div>
<svg class="a" style="left:773px;top:615px" width="19" height="16" viewBox="0 0 19 16"><rect x="3" y="1" width="15" height="13" rx="3" fill="url(#chk)"/><rect x="3" y="1" width="15" height="13" rx="3" fill="#333" opacity="0.4"/><path d="M1 10H5V14H1Z" fill="#ccc" stroke="#888" stroke-width="0.6"/></svg>
<div class="a" style="left:802px;top:611px;width:10px;height:25px;background:linear-gradient(#e2e8e5,#b7bfbc)"></div>
<div class="a" style="left:804px;top:629px;width:0px;height:0px;border-left:3px solid transparent;border-right:3px solid transparent;border-top:3px solid #000"></div>
<div class="a" style="left:4px;top:639px;width:920px;height:20px;background:#e1e7e4"></div>
<div class="a" style="left:9px;top:641px;width:287px;height:16px;border-top:1px solid #a9b3ae;border-left:1px solid #a9b3ae;border-bottom:1px solid #f6f8f7;border-right:1px solid #f6f8f7;background:#e2e8e5"></div>
<div class="a" style="left:300px;top:641px;width:217px;height:16px;border-top:1px solid #a9b3ae;border-left:1px solid #a9b3ae;border-bottom:1px solid #f6f8f7;border-right:1px solid #f6f8f7;background:#e2e8e5"></div>
<div class="a" style="left:521px;top:641px;width:45px;height:16px;border-top:1px solid #a9b3ae;border-left:1px solid #a9b3ae;border-bottom:1px solid #f6f8f7;border-right:1px solid #f6f8f7;background:#e2e8e5"></div>
<div class="a" style="left:570px;top:641px;width:23px;height:16px;border-top:1px solid #a9b3ae;border-left:1px solid #a9b3ae;border-bottom:1px solid #f6f8f7;border-right:1px solid #f6f8f7;background:#e2e8e5"></div>
<div class="a" style="left:597px;top:641px;width:25px;height:16px;border-top:1px solid #a9b3ae;border-left:1px solid #a9b3ae;border-bottom:1px solid #f6f8f7;border-right:1px solid #f6f8f7;background:#e2e8e5"></div>
<div class="a" style="left:626px;top:641px;width:133px;height:16px;border-top:1px solid #a9b3ae;border-left:1px solid #a9b3ae;border-bottom:1px solid #f6f8f7;border-right:1px solid #f6f8f7;background:#e2e8e5"></div>
<div class="a" style="left:763px;top:641px;width:157px;height:16px;border-top:1px solid #a9b3ae;border-left:1px solid #a9b3ae;border-bottom:1px solid #f6f8f7;border-right:1px solid #f6f8f7;background:#e2e8e5"></div>
<svg class="a" style="left:306px;top:642px" width="17" height="13" viewBox="0 0 17 13"><rect x="1" y="5" width="3" height="1" fill="#0010d0"/><rect x="5" y="5" width="4" height="1" fill="#0010d0"/><rect x="4" y="1" width="1" height="3" fill="#0010d0"/><rect x="4" y="6" width="1" height="3" fill="#0010d0"/><rect x="4" y="5" width="1" height="1" fill="#4050d0"/><rect x="10" y="5" width="1" height="1" fill="#111"/><rect x="12" y="5" width="1" height="1" fill="#111"/><rect x="14" y="5" width="1" height="1" fill="#111"/><rect x="4" y="11" width="1" height="1" fill="#111"/><rect x="6" y="11" width="1" height="1" fill="#111"/><rect x="8" y="11" width="1" height="1" fill="#111"/><rect x="10" y="11" width="1" height="1" fill="#111"/><rect x="12" y="11" width="1" height="1" fill="#111"/><rect x="14" y="11" width="1" height="1" fill="#111"/><rect x="15" y="7" width="1" height="1" fill="#111"/><rect x="15" y="9" width="1" height="1" fill="#111"/></svg>
<div class="t" style="left:327.50px;top:642.95px;font-family:'Liberation Sans',sans-serif;font-size:13px;font-weight:normal;color:#111;transform:scaleX(1.0801);">24,64 / 30,21</div>
<svg class="a" style="left:413px;top:642px" width="16" height="13" viewBox="0 0 16 13"><rect x="1" y="5" width="1" height="1" fill="#111"/><rect x="1" y="7" width="1" height="1" fill="#111"/><rect x="1" y="9" width="1" height="1" fill="#111"/><rect x="1" y="11" width="1" height="1" fill="#111"/><rect x="6" y="11" width="1" height="1" fill="#111"/><rect x="6" y="3" width="1" height="1" fill="#111"/><rect x="8" y="11" width="1" height="1" fill="#111"/><rect x="8" y="3" width="1" height="1" fill="#111"/><rect x="10" y="11" width="1" height="1" fill="#111"/><rect x="10" y="3" width="1" height="1" fill="#111"/><rect x="12" y="11" width="1" height="1" fill="#111"/><rect x="12" y="3" width="1" height="1" fill="#111"/><rect x="14" y="11" width="1" height="1" fill="#111"/><rect x="14" y="3" width="1" height="1" fill="#111"/><rect x="6" y="3" width="1" height="1" fill="#111"/><rect x="14" y="3" width="1" height="1" fill="#111"/><rect x="6" y="5" width="1" height="1" fill="#111"/><rect x="14" y="5" width="1" height="1" fill="#111"/><rect x="6" y="7" width="1" height="1" fill="#111"/><rect x="14" y="7" width="1" height="1" fill="#111"/><rect x="6" y="9" width="1" height="1" fill="#111"/><rect x="14" y="9" width="1" height="1" fill="#111"/><rect x="6" y="11" width="1" height="1" fill="#111"/><rect x="14" y="11" width="1" height="1" fill="#111"/><path d="M6 0.5L8 2.5M8 0.5L6 2.5M13 0.5L15 2.5M15 0.5L13 2.5" stroke="#111" stroke-width="0.7"/></svg>
<div class="t" style="left:434.70px;top:642.95px;font-family:'Liberation Sans',sans-serif;font-size:13px;font-weight:normal;color:#111;transform:scaleX(1.0660);">0,00 x 0,00</div>
<div class="t" style="left:530.60px;top:642.95px;font-family:'Liberation Sans',sans-serif;font-size:13px;font-weight:normal;color:#111;transform:scaleX(1.0000);">39%</div>
<div class="t" style="left:631.30px;top:642.95px;font-family:'Liberation Sans',sans-serif;font-size:13px;font-weight:normal;color:#111;transform:scaleX(1.0296);">Слайд 1 / 1</div>
<div class="t" style="left:768.50px;top:642.95px;font-family:'Liberation Sans',sans-serif;font-size:13px;font-weight:normal;color:#111;transform:scaleX(0.9920);">Обычный</div>
<div class="a" style="left:4px;top:657px;width:920px;height:2px;background:#e9eeec"></div>
</body></html>
